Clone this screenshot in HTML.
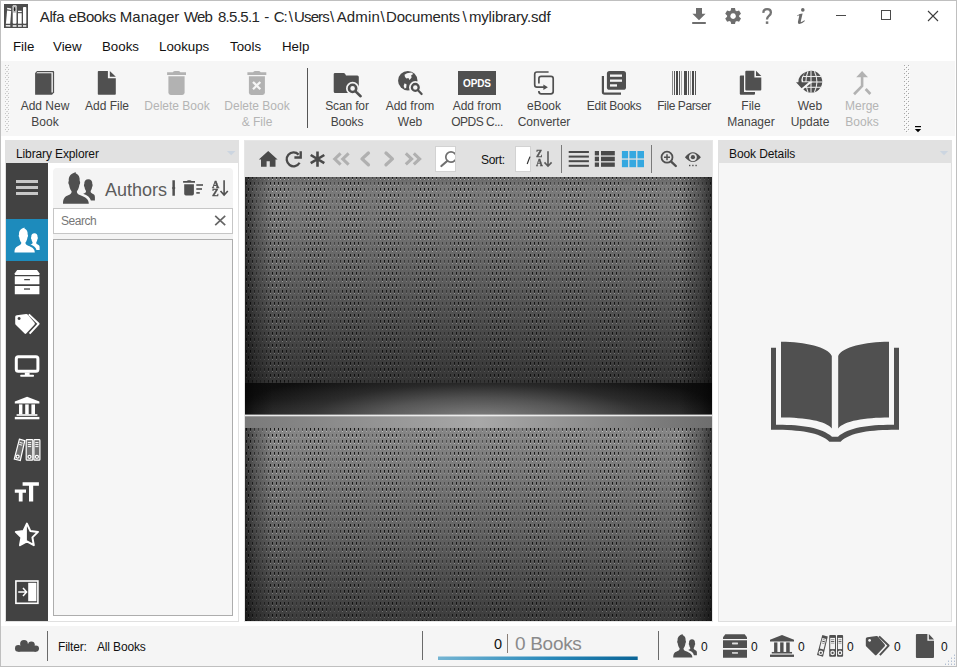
<!DOCTYPE html>
<html>
<head>
<meta charset="utf-8">
<title>Alfa eBooks Manager</title>
<style>
*{box-sizing:border-box;margin:0;padding:0}
html,body{width:957px;height:667px;overflow:hidden;background:#fff}
body{font-family:"Liberation Sans",sans-serif;color:#000;position:relative;font-size:12px}
.abs{position:absolute}
#win{position:absolute;left:0;top:0;width:957px;height:667px;background:#fff;border:1px solid #bfbfbf;overflow:hidden}
.t{position:absolute;white-space:nowrap;line-height:1}
/* title */
#title{left:40px;top:9px;font-size:15px;color:#262626;height:15px;width:520px}
#title span{position:absolute;top:0;white-space:pre}
.menu{top:40px;font-size:13.3px;color:#111}
/* toolbar */
#tb{left:1px;top:61px;width:954px;height:75px;background:#f6f6f6}
.tbl{position:absolute;top:98px;font-size:12px;line-height:16px;color:#444;text-align:center;white-space:nowrap;transform:translateX(-50%)}
.tbl.dis{color:#b4b4b4}
.grip{position:absolute;width:3px;background-image:radial-gradient(circle,#c4c4c4 0.6px,transparent 0.9px);background-size:3px 3px}

.sb0{top:641px;font-size:12px;color:#111}
/* panels */
.phead{position:absolute;height:23px;background:#e1e1e1;font-size:12px;color:#111}
</style>
</head>
<body>
<div id="win"></div>

<!-- TITLE BAR -->
<!-- app icon -->
<svg class="abs" style="left:4px;top:4px" width="24" height="24" viewBox="0 0 24 24">
<rect width="24" height="24" fill="#4d4d4d"/>
<path d="M3.1 6.6 L7.2 7 L6.2 19.7 L1.9 19.7 Z" fill="#fff"/>
<path d="M3.2 3.8 L7.2 4.6 L7.1 5.9 L3.1 5.2 Z" fill="#fff"/>
<path d="M1.8 20.9 L6.3 20.9 L6.3 22.8 L1.8 22.4 Z" fill="#e8e8e8"/>
<rect x="8.7" y="1.2" width="3.8" height="18.5" rx="1" fill="#fff"/>
<rect x="8.7" y="1.2" width="3.8" height="7.5" rx="1" fill="#bdbdbd"/>
<ellipse cx="10.6" cy="5.2" rx="0.75" ry="2.1" fill="#222"/>
<rect x="8.7" y="21" width="3.8" height="1.9" fill="#d8d8d8"/>
<rect x="14" y="6.8" width="3.7" height="1.3" fill="#fff"/>
<rect x="14" y="9.2" width="3.7" height="10.5" fill="#fff"/>
<rect x="14" y="21" width="3.7" height="1.9" fill="#d8d8d8"/>
<rect x="19" y="3" width="3.3" height="16.7" rx="0.8" fill="#fff"/>
<rect x="19" y="21" width="3.3" height="1.9" fill="#d8d8d8"/>
</svg>

<div class="t" id="title"><span style="left:-0.2px;letter-spacing:-0.39px">Alfa</span><span style="left:28.5px;letter-spacing:-0.45px">eBooks</span><span style="left:79.7px;letter-spacing:0.08px">Manager</span><span style="left:144.0px;letter-spacing:-0.90px">Web</span><span style="left:177.9px;letter-spacing:-0.65px">8.5.5.1</span><span style="left:224.3px;letter-spacing:0.00px">-</span><span style="left:233.7px;letter-spacing:-0.90px">C:</span><span style="left:248.8px">\</span><span style="left:254.1px;letter-spacing:-0.90px">Users</span><span style="left:290.0px">\</span><span style="left:296.7px;letter-spacing:0.14px">Admin</span><span style="left:340.4px">\</span><span style="left:346.1px;letter-spacing:-0.23px">Documents</span><span style="left:422.6px">\</span><span style="left:429.0px;letter-spacing:-0.19px">mylibrary.sdf</span></div>


<!-- MENU -->
<div class="t menu" style="left:13px">File</div>
<div class="t menu" style="left:53px">View</div>
<div class="t menu" style="left:102px">Books</div>
<div class="t menu" style="left:159px">Lookups</div>
<div class="t menu" style="left:230px">Tools</div>
<div class="t menu" style="left:282px">Help</div>

<!-- TOOLBAR -->
<div class="abs" id="tb"></div>
<div class="tbl" style="left:45px">Add New<br>Book</div>
<div class="tbl" style="left:107px">Add File</div>
<div class="tbl dis" style="left:177px">Delete Book</div>
<div class="tbl dis" style="left:257px">Delete Book<br>&amp; File</div>
<div class="abs" style="left:307px;top:68px;width:1px;height:60px;background:#555"></div>
<div class="tbl" style="left:347px;letter-spacing:-0.15px">Scan for<br>Books</div>
<div class="tbl" style="left:410px">Add from<br>Web</div>
<div class="tbl" style="left:477px">Add from<br><span style="letter-spacing:-0.5px">OPDS C...</span></div>
<div class="tbl" style="left:544px">eBook<br>Converter</div>
<div class="tbl" style="left:614px;letter-spacing:-0.3px">Edit Books</div>
<div class="tbl" style="left:684px;letter-spacing:-0.4px">File Parser</div>
<div class="tbl" style="left:751px">File<br>Manager</div>
<div class="tbl" style="left:810px">Web<br>Update</div>
<div class="tbl dis" style="left:862px">Merge<br>Books</div>




<!-- LEFT PANEL -->
<div class="abs" style="left:5px;top:140px;width:234px;height:482px;border:1px solid #e0e0e0;border-top:none"></div>
<div class="phead" style="left:5px;top:140px;width:234px"><span class="t" style="left:11px;top:8px;letter-spacing:-0.12px">Library Explorer</span></div>
<div class="abs" style="left:6px;top:163px;width:42px;height:458px;background:#424242"></div>
<div class="abs" style="left:6px;top:219px;width:42px;height:42px;background:#1d8bbc"></div>
<div class="abs" style="left:53px;top:168px;width:180px;height:448px;background:#f4f4f4;border-radius:4px 4px 0 0"></div>
<div class="abs" style="left:53px;top:208px;width:180px;height:26px;background:#fff;border:1px solid #c6c6c6"></div>
<div class="abs" style="left:53px;top:239px;width:180px;height:377px;background:#f6f6f6;border:1px solid #adadad"></div>
<div class="t" style="left:105px;top:181px;font-size:18px;color:#5c5c5c">Authors</div>
<div class="t" style="left:61px;top:215.4px;font-size:12px;color:#777;letter-spacing:-0.45px">Search</div>

<div class="t" style="left:211.5px;top:179.5px;font-family:'Liberation Serif',serif;font-weight:bold;font-size:10px;color:#505050;-webkit-text-stroke:0.35px #505050;will-change:transform">A</div>
<div class="t" style="left:212px;top:188px;font-family:'Liberation Serif',serif;font-weight:bold;font-size:10px;color:#505050;-webkit-text-stroke:0.35px #505050;will-change:transform">Z</div>

<!-- CENTER -->
<div class="abs" style="left:244px;top:140px;width:469px;height:482px;background:#e1e1e1;border:1px solid #e6e6e6"></div>
<svg id="shelf" class="abs" style="left:245px;top:177px" width="467" height="444" viewBox="0 0 467 444" shape-rendering="crispEdges">
<defs>
<linearGradient id="gTop" x1="0" y1="0" x2="0" y2="1">
<stop offset="0" stop-color="#666"/><stop offset="0.05" stop-color="#797979"/><stop offset="0.2" stop-color="#767676"/><stop offset="0.5" stop-color="#5e5e5e"/><stop offset="0.8" stop-color="#454545"/><stop offset="1" stop-color="#353535"/>
</linearGradient>
<linearGradient id="gBot" x1="0" y1="0" x2="0" y2="1">
<stop offset="0" stop-color="#868686"/><stop offset="0.15" stop-color="#7e7e7e"/><stop offset="0.5" stop-color="#666"/><stop offset="0.8" stop-color="#4c4c4c"/><stop offset="1" stop-color="#3c3c3c"/>
</linearGradient>
<linearGradient id="gDark" x1="0" y1="0" x2="0" y2="1">
<stop offset="0" stop-color="#0e0e0e"/><stop offset="0.5" stop-color="#121212"/><stop offset="1" stop-color="#202020"/>
</linearGradient>
<radialGradient id="gGlow" gradientUnits="userSpaceOnUse" cx="0" cy="0" r="1" gradientTransform="translate(233 240) scale(250 50)">
<stop offset="0" stop-color="#fff" stop-opacity="0.42"/><stop offset="0.38" stop-color="#fff" stop-opacity="0.27"/><stop offset="0.66" stop-color="#fff" stop-opacity="0.11"/><stop offset="1" stop-color="#fff" stop-opacity="0"/>
</radialGradient>
<linearGradient id="gFront" x1="0" y1="0" x2="1" y2="0">
<stop offset="0" stop-color="#7a7a7a"/><stop offset="0.5" stop-color="#a8a8a8"/><stop offset="1" stop-color="#6e6e6e"/>
</linearGradient>
<linearGradient id="gVig" x1="0" y1="0" x2="1" y2="0">
<stop offset="0" stop-color="#000" stop-opacity="0.6"/><stop offset="0.02" stop-color="#000" stop-opacity="0.3"/><stop offset="0.06" stop-color="#000" stop-opacity="0"/><stop offset="0.93" stop-color="#000" stop-opacity="0"/><stop offset="0.975" stop-color="#000" stop-opacity="0.3"/><stop offset="1" stop-color="#000" stop-opacity="0.6"/>
</linearGradient>
<pattern id="ph1" x="0" y="-1" width="4" height="12" patternUnits="userSpaceOnUse">
<rect x="3" y="0" width="1" height="2" fill="#0c0c0c" fill-opacity="0.9"/><rect x="3" y="2" width="1" height="1" fill="#0c0c0c" fill-opacity="0.55"/>
<rect x="1" y="6" width="1" height="2" fill="#0c0c0c" fill-opacity="0.9"/><rect x="1" y="8" width="1" height="1" fill="#0c0c0c" fill-opacity="0.55"/>
</pattern>
<pattern id="pl1" x="0" y="-1" width="4" height="12" patternUnits="userSpaceOnUse">
<rect x="3" y="3" width="1" height="1" fill="#fff" fill-opacity="0.55"/><rect x="1" y="9" width="1" height="1" fill="#fff" fill-opacity="0.55"/>
</pattern>
<pattern id="ph2" x="0" y="251" width="4" height="12" patternUnits="userSpaceOnUse">
<rect x="1" y="0" width="1" height="2" fill="#0c0c0c" fill-opacity="0.9"/><rect x="1" y="2" width="1" height="1" fill="#0c0c0c" fill-opacity="0.55"/>
<rect x="3" y="6" width="1" height="2" fill="#0c0c0c" fill-opacity="0.9"/><rect x="3" y="8" width="1" height="1" fill="#0c0c0c" fill-opacity="0.55"/>
</pattern>
<pattern id="pl2" x="0" y="251" width="4" height="12" patternUnits="userSpaceOnUse">
<rect x="1" y="3" width="1" height="1" fill="#fff" fill-opacity="0.55"/><rect x="3" y="9" width="1" height="1" fill="#fff" fill-opacity="0.55"/>
</pattern>
<linearGradient id="gMoire" gradientUnits="userSpaceOnUse" x1="15" y1="0" x2="51.85" y2="0" spreadMethod="repeat">
<stop offset="0" stop-color="#fff" stop-opacity="0.4"/><stop offset="0.12" stop-color="#fff" stop-opacity="0.55"/><stop offset="0.3" stop-color="#fff" stop-opacity="1"/><stop offset="0.7" stop-color="#fff" stop-opacity="1"/><stop offset="0.88" stop-color="#fff" stop-opacity="0.55"/><stop offset="1" stop-color="#fff" stop-opacity="0.4"/>
</linearGradient>
<linearGradient id="gFade1" gradientUnits="userSpaceOnUse" x1="0" y1="0" x2="0" y2="206">
<stop offset="0" stop-color="#000" stop-opacity="0"/><stop offset="0.3" stop-color="#000" stop-opacity="0.1"/><stop offset="1" stop-color="#000" stop-opacity="0.6"/>
</linearGradient>
<linearGradient id="gFade2" gradientUnits="userSpaceOnUse" x1="0" y1="251" x2="0" y2="444">
<stop offset="0" stop-color="#000" stop-opacity="0"/><stop offset="0.3" stop-color="#000" stop-opacity="0.1"/><stop offset="1" stop-color="#000" stop-opacity="0.55"/>
</linearGradient>
<mask id="mMoire" maskUnits="userSpaceOnUse" x="0" y="0" width="467" height="444"><rect x="0" y="0" width="467" height="444" fill="url(#gMoire)"/></mask>
<mask id="mL1" maskUnits="userSpaceOnUse" x="0" y="0" width="467" height="444"><rect x="0" y="0" width="467" height="444" fill="url(#gMoire)"/><rect x="0" y="0" width="467" height="206" fill="url(#gFade1)"/></mask>
<mask id="mL2" maskUnits="userSpaceOnUse" x="0" y="0" width="467" height="444"><rect x="0" y="0" width="467" height="444" fill="url(#gMoire)"/><rect x="0" y="251" width="467" height="193" fill="url(#gFade2)"/></mask>
</defs>
<rect x="0" y="0" width="467" height="206" fill="url(#gTop)"/>
<rect x="0" y="0" width="467" height="206" fill="url(#ph1)" mask="url(#mMoire)"/>
<rect x="0" y="0" width="467" height="206" fill="url(#pl1)" mask="url(#mL1)"/>
<rect x="0" y="251" width="467" height="193" fill="url(#gBot)"/>
<rect x="0" y="251" width="467" height="193" fill="url(#ph2)" mask="url(#mMoire)"/>
<rect x="0" y="251" width="467" height="193" fill="url(#pl2)" mask="url(#mL2)"/>
<rect x="0" y="206" width="467" height="32" fill="url(#gDark)"/>
<rect x="0" y="206" width="467" height="32" fill="url(#gGlow)"/>
<rect x="0" y="239" width="467" height="12" fill="url(#gFront)"/>
<rect x="0" y="237" width="467" height="1" fill="#fff" fill-opacity="0.35"/>
<rect x="0" y="238" width="467" height="1" fill="#ececec"/>
<rect x="0" y="239" width="467" height="1" fill="#fff" fill-opacity="0.25"/>
<rect x="0" y="0" width="467" height="237" fill="url(#gVig)"/>
<rect x="0" y="251" width="467" height="193" fill="url(#gVig)"/>
</svg>

<div class="t" style="left:481px;top:154px;font-size:12px;color:#111;letter-spacing:-0.3px">Sort:</div>
<div class="t" style="left:535.5px;top:149.5px;font-family:'Liberation Serif',serif;font-weight:bold;font-size:9.5px;color:#555;-webkit-text-stroke:0.3px #555;will-change:transform">Z</div>
<div class="t" style="left:535.5px;top:158.5px;font-family:'Liberation Serif',serif;font-weight:bold;font-size:9.5px;color:#555;-webkit-text-stroke:0.3px #555;will-change:transform">A</div>

<!-- RIGHT PANEL -->
<div class="abs" style="left:718px;top:163px;width:234px;height:459px;background:#f6f6f6;border:1px solid #dedede;border-top:none"></div>
<div class="phead" style="left:718px;top:140px;width:234px"><span class="t" style="left:11px;top:8px;letter-spacing:-0.1px">Book Details</span></div>

<!-- STATUS BAR -->
<div class="abs" id="sb" style="left:1px;top:626px;width:955px;height:40px;background:#f5f5f5"></div>
<div class="abs" style="left:47px;top:631px;width:1px;height:30px;background:#6a6a6a"></div>
<div class="abs" style="left:422px;top:631px;width:1px;height:29px;background:#6a6a6a"></div>
<div class="abs" style="left:658px;top:631px;width:1px;height:29px;background:#6a6a6a"></div>
<div class="t" style="left:58px;top:641px;font-size:12px;color:#111;letter-spacing:-0.2px">Filter:</div>
<div class="t" style="left:97px;top:641px;font-size:12px;color:#111;letter-spacing:-0.15px">All Books</div>
<div class="t" style="left:494px;top:637px;font-size:14.5px;color:#111">0</div>
<div class="abs" style="left:507px;top:634px;width:1px;height:19px;background:#8a7e76"></div>
<div class="t" style="left:515px;top:634px;font-size:19px;color:#8a8a8a;letter-spacing:-0.3px">0 Books</div>
<div class="t sb0" style="left:701px">0</div>
<div class="t sb0" style="left:751px">0</div>
<div class="t sb0" style="left:798px">0</div>
<div class="t sb0" style="left:847px">0</div>
<div class="t sb0" style="left:894px">0</div>
<div class="t sb0" style="left:941px">0</div>

<!-- ICON OVERLAY (page coordinates) -->
<svg id="ico" class="abs" style="left:0;top:0" width="957" height="667" viewBox="0 0 957 667">
<defs>
<symbol id="authors" viewBox="0 0 32 32" overflow="visible">
<path d="M0 31.8 C0 26.4 2 24.6 5.2 23.3 C8 22.1 8.7 21.2 8.6 19.2 C7.1 17.2 6.3 14.8 6.1 12.7 C5.2 11.8 5.1 9.6 5.8 8.9 C5.4 4.2 7.8 1.6 12.9 0 C12.6 0.6 12.5 1 12.7 1.3 C15.6 2.6 17 5 16.7 8.9 C17.4 9.6 17.3 11.8 16.4 12.7 C16.2 14.8 15.4 17.2 13.9 19.2 C13.8 21.2 14.5 22.1 17.4 23.3 C22.4 25.3 25.8 27.2 25.8 31.8 Z"/>
<path d="M20.2 21.7 C22.2 21 23.1 20.5 23 19 C22.1 17.6 21.6 16.1 21.5 14.9 C20.8 14.2 20.8 12.7 21.3 12.1 C21.1 9 22.7 7.2 25.3 7.2 C27.9 7.2 29.5 9 29.3 12.1 C29.8 12.7 29.8 14.2 29.1 14.9 C29 16.1 28.5 17.6 27.6 19 C27.5 20.5 28.3 21.2 30 21.9 C31.6 22.6 31.9 23.6 31.9 25.2 V28.6 H27.9 C27.2 25.4 24.4 23.3 20.2 21.7 Z"/>
</symbol>
<symbol id="cabinet" viewBox="0 0 24.6 24.2" overflow="visible">
<path d="M2.4 0 H22.2 L24.6 3.2 V5 H0 V3.2 Z"/>
<path d="M0 6.2 H24.6 V14.3 H0 Z M9.4 8.9 V10.3 H15.1 V8.9 Z" fill-rule="evenodd"/>
<path d="M0 16 H24.6 V24.2 H0 Z M9.4 18.2 V19.9 H15.1 V18.2 Z" fill-rule="evenodd"/>
</symbol>
<symbol id="bank" viewBox="0 0 24.6 22.6" overflow="visible">
<path d="M12.3 0 L24.6 4.8 V6.8 H0 V4.8 Z"/>
<rect x="4.2" y="7.6" width="3.4" height="10"/><rect x="10.4" y="7.6" width="3.5" height="10"/><rect x="16.6" y="7.6" width="3.6" height="10"/>
<rect x="1.8" y="17.4" width="20.8" height="1.6"/><rect x="0" y="20.1" width="24.6" height="2.4"/>
</symbol>
<symbol id="tags" viewBox="0 0 24.6 20.2" overflow="visible">
<path d="M1.6 1.1 L11 0 Q11.8 -0.1 12.4 0.5 L19.4 8.7 Q20 9.6 19.4 10.4 L11 19.5 Q10.2 20.3 9.4 19.5 L0.5 10.6 Q0 10.1 0 9.4 V2.6 Q0 1.3 1.6 1.1 Z M3.9 2.9 A1.5 1.5 0 1 0 3.91 2.9 Z" fill-rule="evenodd"/>
<path d="M13.6 0.3 L23.4 9.7 L14.4 19.6" fill="none" stroke-width="2" stroke="currentColor" stroke-linejoin="round"/>
</symbol>
</defs>

<g id="grips" shape-rendering="crispEdges">
<pattern id="pgR" x="904" y="111" width="8" height="4" patternUnits="userSpaceOnUse">
<rect x="2" y="0" width="1" height="1" fill="#a6a6a6"/><rect x="3" y="1" width="1" height="1" fill="#fff"/>
<rect x="0" y="2" width="1" height="1" fill="#a6a6a6"/><rect x="1" y="3" width="1" height="1" fill="#fff"/>
<rect x="4" y="2" width="1" height="1" fill="#a6a6a6"/><rect x="5" y="3" width="1" height="1" fill="#fff"/>
</pattern>
<pattern id="pgL" x="5" y="65" width="8" height="4" patternUnits="userSpaceOnUse">
<rect x="0" y="0" width="1" height="1" fill="#c4c4c4"/><rect x="3" y="0" width="1" height="1" fill="#c4c4c4"/>
<rect x="1" y="2" width="2" height="1" fill="#d4d4d4"/>
<rect x="1" y="1" width="1" height="1" fill="#fcfcfc"/><rect x="4" y="1" width="1" height="1" fill="#fcfcfc"/>
</pattern>
<rect x="904" y="65" width="6" height="68" fill="url(#pgR)"/>
<rect x="5" y="65" width="5" height="67" fill="url(#pgL)"/>
</g>
<g id="title-icons">
<path d="M696 8 H702 V13.8 H705.6 L699 20.2 L692.4 13.8 H696 Z M692.2 22 H705.8 V24 H692.2 Z" fill="#6e6e6e"/>
<g transform="translate(733.1 16.1)" fill="#6e6e6e">
<path d="M-1.9 -8 H1.9 L2.4 -5.6 L0 -4 L-2.4 -5.6 Z" id="tooth"/>
<use href="#tooth" transform="rotate(60)"/><use href="#tooth" transform="rotate(120)"/><use href="#tooth" transform="rotate(180)"/><use href="#tooth" transform="rotate(240)"/><use href="#tooth" transform="rotate(300)"/>
<path d="M0 -6.1 A6.1 6.1 0 1 0 0.01 -6.1 Z M0 -2.8 A2.8 2.8 0 1 1 -0.01 -2.8 Z" fill-rule="evenodd"/>
</g>
<path d="M763.3 12.9 Q763.4 9.1 767.1 9.1 Q770.9 9.1 770.9 12.4 Q770.9 14.3 768.9 15.9 Q767 17.4 767 19.6" fill="none" stroke="#747474" stroke-width="2.3"/>
<rect x="765.8" y="21.4" width="2.5" height="2.5" fill="#747474"/>
<circle cx="802.8" cy="9.9" r="1.8" fill="#6a6a6a"/>
<path d="M797.2 15.4 Q799.6 13.5 802.6 13.5 L800.8 21.3 Q800.6 22.2 801.4 21.9 L804.5 20.2 L804.9 21.1 Q802 24 799.5 24 Q797.5 24 797.9 22.1 L799.2 15.9 Q799.3 15.1 798.6 15.4 L797.5 16.2 Z" fill="#6a6a6a"/>
<rect x="836" y="15" width="10" height="1" fill="#4a4a4a"/>
<rect x="881.5" y="10.5" width="9" height="9" fill="none" stroke="#4a4a4a" stroke-width="1"/>
<path d="M928 11 L938 21 M938 11 L928 21" stroke="#3c3c3c" stroke-width="1.1" fill="none"/>
</g>
<g id="tb-icons" fill="#505050">
<!-- add new book -->
<path d="M37 71 H53.2 Q54.1 71 54.1 71.9 V92.6 L52 94.8 H35.1 V72.9 Z"/>
<path d="M37.2 72.3 H52.8 V92.6 H51.5 V73.3 H36.4 Z" fill="#fff"/>
<!-- add file -->
<path d="M98.6 71 H107.9 V78.2 H115.8 V94 Q115.8 94.8 115 94.8 H98.6 Q97.8 94.8 97.8 94 V71.8 Q97.8 71 98.6 71 Z"/>
<path d="M109.8 71 L115.8 76.8 H109.8 Z"/>
<!-- delete book -->
<g fill="#b2b2b2">
<path d="M167.1 72.2 H172.8 Q173.6 70.9 175 70.9 H178.2 Q179.6 70.9 180.4 72.2 H186 V74.9 H167.1 Z"/>
<path d="M168.4 76.2 H184.6 V92.6 Q184.6 94.9 182.3 94.9 H170.7 Q168.4 94.9 168.4 92.6 Z"/>
<!-- delete book & file -->
<path d="M247.4 72.2 H253.1 Q253.9 70.9 255.3 70.9 H258.5 Q259.9 70.9 260.7 72.2 H266.3 V74.9 H247.4 Z"/>
<path d="M248.9 76.2 H264.9 V92.6 Q264.9 94.9 262.6 94.9 H251.2 Q248.9 94.9 248.9 92.6 Z"/>
</g>
<path d="M253 82 L260.3 89.2 M260.3 82 L253 89.2" stroke="#f5f5f5" stroke-width="2.3" fill="none"/>
<!-- scan for books -->
<path d="M335 72.9 H343.5 Q344.6 72.9 345.2 74 L346 75.4 H357.3 Q358.8 75.4 358.8 76.9 V91.4 Q358.8 92.9 357.3 92.9 H335.2 Q333.7 92.9 333.7 91.4 V74.3 Q333.7 72.9 335 72.9 Z"/>
<circle cx="352.6" cy="88.4" r="6.6" fill="#f5f5f5"/>
<path d="M356 92 L361.8 97.6" stroke="#f5f5f5" stroke-width="4.6" fill="none" stroke-linecap="round"/>
<circle cx="352.6" cy="88.4" r="3.6" fill="none" stroke="#505050" stroke-width="2.6"/>
<path d="M355.8 91.6 L360.6 96.2" stroke="#505050" stroke-width="2.6" fill="none" stroke-linecap="round"/>
<!-- add from web -->
<circle cx="407.8" cy="80.7" r="9.7"/>
<path d="M404.5 74.8 L407 73.3 L411.5 72.6 L413.3 74 L411.2 75.2 L411.6 77.6 L409.6 80 L408.4 78 L406.4 78.4 L405 77 Z" fill="#f5f5f5"/>
<path d="M404.6 83.2 L406.6 84.6 L406.2 87.4 L404.8 88.8 L403.6 86 Z" fill="#f5f5f5"/>
<circle cx="415.3" cy="87.4" r="6.3" fill="#f5f5f5"/>
<path d="M418.4 90.6 L422.3 94.8" stroke="#f5f5f5" stroke-width="4.4" fill="none" stroke-linecap="round"/>
<circle cx="415.3" cy="87.4" r="3.4" fill="none" stroke="#505050" stroke-width="2.3"/>
<path d="M418 90.2 L421.6 94" stroke="#505050" stroke-width="2.2" fill="none" stroke-linecap="round"/>
<!-- OPDS -->
<rect x="458" y="71" width="38" height="24"/>
<!-- ebook converter -->
<g fill="none" stroke="#505050" stroke-width="1.7">
<path d="M548.6 72 H537 Q534.7 72 534.7 74.3 V84.8 Q534.7 87.2 537 87.2 H545"/>
<path d="M538.9 83.6 V78.6 Q538.9 76.3 541.2 76.3 H550.9 Q553.2 76.3 553.2 78.6 V91.5 Q553.2 93.8 550.9 93.8 H541.2 Q538.9 93.8 538.9 91.5 V91"/>
</g>
<path d="M543.4 84.4 L547.9 87.2 L543.4 90 Z"/>
<!-- edit books -->
<rect x="606.9" y="71" width="19.1" height="18.8" rx="2.6"/>
<path d="M602.9 76 V92 Q602.9 93.7 604.6 93.7 H621" fill="none" stroke="#505050" stroke-width="2.2"/>
<g fill="#f5f5f5"><rect x="610" y="74.5" width="12" height="2.3"/><rect x="610" y="79.5" width="12" height="2.3"/><rect x="610" y="84.3" width="7" height="2.3"/></g>
<!-- file parser (barcode) -->
<rect x="672" y="71" width="1" height="24" fill="#8a8a8a"/><rect x="674" y="71" width="1" height="24" fill="#585858"/><rect x="676" y="71" width="2" height="24" fill="#484848"/><rect x="679" y="71" width="1" height="24" fill="#585858"/><rect x="681" y="71" width="1" height="24" fill="#a8a8a8"/><rect x="684" y="71" width="3" height="24" fill="#4c4c4c"/><rect x="688" y="71" width="1" height="24" fill="#585858"/><rect x="690" y="71" width="1" height="24" fill="#a8a8a8"/><rect x="692" y="71" width="2" height="24" fill="#484848"/><rect x="695" y="71" width="1" height="24" fill="#585858"/>
<!-- file manager -->
<path d="M740.8 75.6 H744 V92 H755 V93.8 Q755 94.8 754 94.8 H740.8 Q739.8 94.8 739.8 93.8 V76.6 Q739.8 75.6 740.8 75.6 Z"/>
<path d="M746.3 70.8 H754.4 V77.4 H761.3 V89.6 Q761.3 90.6 760.3 90.6 H746.3 Q745.3 90.6 745.3 89.6 V71.8 Q745.3 70.8 746.3 70.8 Z"/>
<path d="M756 70.8 L761.3 76 H756 Z"/>
<!-- web update -->
<circle cx="811.3" cy="81.7" r="10.9"/>
<g fill="none" stroke="#e9e9e9" stroke-width="1.1">
<path d="M811 70.8 V92.6"/><path d="M801 76.5 H822"/><path d="M800.4 82 H822.2"/><path d="M801 87.3 H822"/>
<path d="M808 71.2 Q803.8 81.7 808 92.2"/><path d="M814.4 71.2 Q819.4 81.7 814.4 92.2"/>
</g>
<path d="M798.6 70 H806 Q800.6 76 802.4 82.6 H810.5 L801.4 89.6 L794.2 82.6 H797.4 Q795.4 75.6 798.6 70 Z" fill="#f5f5f5" stroke="#f5f5f5" stroke-width="1.6"/>
<path d="M806.6 71.5 Q800 77 801.8 82.3 H808.8 L801.6 88.3 L796 82.3 H798.4 Q797.6 75.6 806.6 71.5 Z" fill="#505050"/>
<!-- merge books -->
<g fill="#b2b2b2">
<path d="M862.1 71 L868 77.3 H863.4 V86.6 L855 95.2 L853.1 93.3 L860.8 85.5 V77.3 H856.2 Z"/>
<path d="M866.6 88.1 L871.3 93.1 L869.4 95 L864.7 90 Z"/>
</g>
<!-- overflow arrow -->
<rect x="915" y="126" width="6" height="1.2" fill="#000"/>
<path d="M914.8 129 H921.2 L918 132.2 Z" fill="#000"/>
</g>

<g id="left-icons">
<!-- hamburger -->
<g fill="#c8c8c8"><rect x="16" y="180" width="22" height="3"/><rect x="16" y="186" width="22" height="3"/><rect x="16" y="192" width="22" height="3"/></g>
<!-- authors big -->
<use href="#authors" x="63" y="172" width="32" height="32" fill="#505050"/>
<!-- header separator -->
<path d="M172.4 180.3 H174.9 V187 L175.4 188 L174.9 189 V195.7 H172.4 V189 L171.9 188 L172.4 187 Z" fill="#505050"/>
<!-- trash+lines -->
<g fill="#505050">
<path d="M183.1 181.1 H186.8 Q187.4 180.2 188.4 180.2 H190 Q191 180.2 191.6 181.1 H195 V182.8 H183.1 Z"/>
<path d="M184.2 184.2 H193.9 V193.8 Q193.9 195.5 192.2 195.5 H185.9 Q184.2 195.5 184.2 193.8 Z"/>
<rect x="196.3" y="184.2" width="6.7" height="1.6"/><rect x="196.3" y="188.2" width="5.7" height="1.6"/><rect x="196.3" y="192.1" width="3.5" height="1.6"/>
</g>
<!-- AZ arrow -->
<path d="M224.1 180.3 V194.6 M220.5 191 L224.1 195 L227.8 191" fill="none" stroke="#505050" stroke-width="1.6"/>
<!-- search clear X -->
<path d="M215.2 215.9 L225.2 225.2 M225.2 215.9 L215.2 225.2" stroke="#666" stroke-width="1.7" fill="none"/>
<!-- sidebar: authors -->
<use href="#authors" x="14.5" y="227.5" width="25.2" height="25.2" fill="#fff"/>
<!-- cabinet -->
<use href="#cabinet" x="14.8" y="270" width="24.6" height="24.2" fill="#fff"/>
<rect x="24.2" y="288.1" width="5.7" height="1.7" fill="#8a8a8a"/>
<!-- tags -->
<use href="#tags" x="15.2" y="314.1" width="24.6" height="20.2" fill="#fff" color="#fff"/>
<!-- monitor -->
<rect x="16.3" y="356.7" width="21.6" height="14.6" rx="2" fill="none" stroke="#fff" stroke-width="3"/>
<rect x="24.8" y="372.5" width="4.8" height="2.6" fill="#fff"/><rect x="20.2" y="374.7" width="13.8" height="2.1" rx="0.8" fill="#fff"/>
<!-- bank -->
<use href="#bank" x="14.8" y="396.8" width="24.6" height="22.6" fill="#fff"/>
<!-- binders -->
<g fill="#707070" stroke="#fff" stroke-width="1.2">
<path d="M19.4 439.2 L24.8 440.7 L20.3 460.5 L14.3 459.1 Z"/>
<rect x="26.2" y="439.6" width="6.6" height="20.6" rx="0.8"/>
<rect x="33.9" y="439.6" width="6" height="20.6" rx="0.8"/>
<circle cx="17.6" cy="456.6" r="1.5" fill="#404040" stroke-width="1.3"/><circle cx="29.5" cy="456.8" r="1.5" fill="#404040" stroke-width="1.3"/><circle cx="36.9" cy="456.8" r="1.5" fill="#404040" stroke-width="1.3"/>
</g>
<g stroke="#fff" stroke-width="1" fill="none"><path d="M27.8 442.6 H31.2 M27.8 444.6 H31.2 M27.8 446.6 H31.2 M35.3 442.6 H38.5 M35.3 444.6 H38.5 M35.3 446.6 H38.5 M19.6 442.4 L22.6 443.2 M19.2 444.4 L22.2 445.2"/></g>
<!-- TT -->
<path d="M22.6 482.2 H38.9 V485.8 H33.2 V501.4 H29 V485.8 H22.6 Z M14.8 489.4 H26 V492.7 H22.6 V501.4 H18.8 V492.7 H14.8 Z" fill="#fff"/>
<!-- star -->
<path d="M26.9 523.6 L30.3 530.9 L38 531.9 L32.4 537.4 L33.8 545.2 L26.9 541.4 L20 545.2 L21.4 537.4 L15.8 531.9 L23.5 530.9 Z" fill="none" stroke="#fff" stroke-width="2" stroke-linejoin="round"/>
<path d="M26.9 523.6 V541.4 L20 545.2 L21.4 537.4 L15.8 531.9 L23.5 530.9 Z" fill="#fff"/>
<!-- collapse -->
<rect x="15.9" y="581" width="22" height="22.3" fill="none" stroke="#fff" stroke-width="1.6"/>
<rect x="28.2" y="582.8" width="8.2" height="18.4" fill="#fff"/>
<path d="M18.2 592 H26 M23 588 L26.6 592 L23 596" fill="none" stroke="#fff" stroke-width="1.5"/>
</g>

<g id="center-icons">
<!-- home -->
<path d="M268.2 151 L277.6 159.6 H275.5 V166.7 H269.8 V161.3 H266.6 V166.7 H261 V159.6 H258.8 Z" fill="#4a4a4a"/>
<!-- refresh -->
<path d="M298.6 154.6 A6.9 6.9 0 1 0 299.6 162.8" fill="none" stroke="#4a4a4a" stroke-width="2.3"/>
<path d="M300.7 151.2 V157.5 H294.4" fill="none" stroke="#4a4a4a" stroke-width="2.4"/>
<!-- asterisk -->
<path d="M317.5 151.5 V166.7 M310.7 155 L324.3 163.2 M324.3 155 L310.7 163.2" fill="none" stroke="#4a4a4a" stroke-width="2.6"/>
<!-- nav chevrons (disabled) -->
<g fill="none" stroke="#b0b0b0" stroke-width="3.1">
<path d="M340.6 153.4 L334.8 159 L340.6 164.6"/><path d="M348.6 153.4 L342.8 159 L348.6 164.6"/>
<path d="M405.8 153.4 L411.6 158.9 L405.8 164.4"/><path d="M413.8 153.4 L419.6 158.9 L413.8 164.4"/>
</g>
<g fill="none" stroke="#b0b0b0" stroke-width="3.3" stroke-linecap="round" stroke-linejoin="round">
<path d="M368.4 153 L362 158.9 L368.4 164.8"/><path d="M386 153 L392.4 158.9 L386 164.8"/>
</g>
<!-- search box -->
<rect x="435.5" y="146.5" width="20" height="25" fill="#fff" stroke="#d2d2d2" stroke-width="1"/>
<clipPath id="cpS"><rect x="436" y="147" width="19" height="24"/></clipPath>
<g clip-path="url(#cpS)" fill="none" stroke="#707070"><circle cx="451" cy="157" r="5.2" stroke-width="1.7"/><path d="M447.2 161 L441.4 166" stroke-width="2.2" stroke-linecap="round"/></g>
<!-- sort combo -->
<rect x="515.5" y="146.5" width="15" height="25" fill="#fff" stroke="#d2d2d2" stroke-width="1"/>
<path d="M527.2 164 L530 156.6" stroke="#333" stroke-width="1.2" fill="none"/>
<!-- ZA arrow -->
<path d="M548 151.3 V165.6 M544.5 162.4 L548 166.2 L551.6 162.4" fill="none" stroke="#5a5a5a" stroke-width="1.6"/>
<!-- separators -->
<rect x="561" y="145" width="1" height="28" fill="#7a7a7a"/>
<rect x="651" y="145" width="1" height="28" fill="#7a7a7a"/>
<!-- list -->
<g fill="#4a4a4a"><rect x="568.7" y="151" width="20.2" height="2"/><rect x="568.7" y="155.6" width="20.2" height="2"/><rect x="568.7" y="160.2" width="20.2" height="2"/><rect x="568.7" y="164.8" width="20.2" height="2"/>
<!-- details -->
<rect x="594.8" y="151" width="4.2" height="4.4"/><rect x="601" y="151" width="13.8" height="4.4"/>
<rect x="594.8" y="156.7" width="4.2" height="4.5"/><rect x="601" y="156.7" width="13.8" height="4.5"/>
<rect x="594.8" y="162.5" width="4.2" height="4.3"/><rect x="601" y="162.5" width="13.8" height="4.3"/></g>
<!-- grid (active) -->
<g fill="#35a8e0"><rect x="621.9" y="151" width="6.2" height="7.4"/><rect x="629.4" y="151" width="6.7" height="7.4"/><rect x="637.4" y="151" width="6.6" height="7.4"/>
<rect x="621.9" y="159.7" width="6.2" height="7.5"/><rect x="629.4" y="159.7" width="6.7" height="7.5"/><rect x="637.4" y="159.7" width="6.6" height="7.5"/></g>
<!-- zoom -->
<g fill="none" stroke="#505050"><circle cx="667" cy="157.2" r="5.5" stroke-width="1.8"/><path d="M671.2 161.6 L675.8 166" stroke-width="2.4" stroke-linecap="round"/><path d="M664 157.2 H670 M667 154.2 V160.2" stroke-width="1.5"/></g>
<!-- eye -->
<path d="M684.9 157.2 Q692.9 147.4 700.9 157.2 Q692.9 166.6 684.9 157.2 Z M692.9 153.2 A4 4 0 1 0 692.91 153.2 Z" fill="#505050" fill-rule="evenodd"/>
<circle cx="692.9" cy="157.2" r="2.1" fill="#505050"/>
<g fill="#505050"><rect x="689" y="164.8" width="1.4" height="1.4"/><rect x="692.2" y="164.8" width="1.4" height="1.4"/><rect x="695.4" y="164.8" width="1.4" height="1.4"/></g>
</g>
<g id="right-icons">
<path d="M939.8 151 H948.2 L944 155.2 Z" fill="#ccd5e0"/>
<path d="M226.9 151 H235.5 L231.2 155.2 Z" fill="#ccd5e0"/>
<!-- big open book -->
<g fill="#505050">
<path d="M781 341.8 C805 342 828 347 831.8 356 V428.6 C826 421 805 417.6 781 417.6 Z"/>
<path d="M889 341.8 C865 342 842 347 838.2 356 V428.6 C844 421 865 417.6 889 417.6 Z"/>
<path d="M771 347.8 H776 V424.8 C800 424.6 822 427.4 832 436.8 H838 C848 427.4 870 424.6 894 424.8 V347.8 H899 V429.8 C873 429.6 850 432 840.6 441.8 H829.4 C820 432 797 429.6 771 429.8 Z"/>
</g>
</g>

<linearGradient id="gProg" x1="0" y1="0" x2="1" y2="0"><stop offset="0" stop-color="#74b4d2"/><stop offset="0.55" stop-color="#2a8abb"/><stop offset="1" stop-color="#0a6496"/></linearGradient>
<rect x="438" y="656.5" width="199.7" height="3.5" fill="url(#gProg)"/>
<g id="sb-icons" fill="#505050">
<!-- cloud -->
<circle cx="18.3" cy="648.4" r="3.3"/><circle cx="24" cy="643.9" r="3.9"/><circle cx="31.4" cy="644.9" r="3.3"/><circle cx="35.9" cy="648.6" r="3.1"/>
<rect x="18.3" y="646" width="17.6" height="5.7"/><rect x="21" y="643.9" width="13.4" height="4"/>
<use href="#authors" x="672.8" y="634" width="24.6" height="23.7" preserveAspectRatio="none"/>
<use href="#cabinet" x="723" y="634" width="24" height="23.9" preserveAspectRatio="none"/>
<rect x="732.4" y="642.7" width="5.5" height="1.5" fill="#e0e0e0"/><rect x="732.4" y="652.2" width="5.5" height="1.7" fill="#bdbdbd"/>
<use href="#bank" x="770" y="634.8" width="24" height="22.4" preserveAspectRatio="none"/>
<!-- binders -->
<path d="M822.3 635 L827.8 636.5 L823 656.7 L817 655.1 Z"/>
<rect x="829.2" y="635" width="6.8" height="21.7" rx="0.9"/>
<rect x="837" y="635" width="6.1" height="21.7" rx="0.9"/>
<g fill="#f2f2f2"><path d="M822.4 637.9 L826.2 638.9 L823.6 649.6 L819.8 648.6 Z"/><rect x="830.2" y="637.9" width="4.8" height="11.2"/><rect x="837.9" y="637.9" width="4.2" height="11.2"/>
<circle cx="820.8" cy="652.8" r="2.3"/><circle cx="832.6" cy="652.9" r="2.3"/><circle cx="840" cy="652.9" r="2.3"/></g>
<circle cx="820.8" cy="652.8" r="1.1"/><circle cx="832.6" cy="652.9" r="1.1"/><circle cx="840" cy="652.9" r="1.1"/>
<path d="M830.9 641.4 H834.3 M838.5 641.4 H841.5 M822.2 641.2 L825 641.9" stroke="#505050" stroke-width="1" fill="none"/>
<path d="M830.9 639.5 H834.3 M830.9 643.2 H834.3 M838.5 639.5 H841.5 M838.5 643.2 H841.5 M822.7 639.4 L825.5 640.1 M821.8 643 L824.6 643.7" stroke="#9a9a9a" stroke-width="0.9" fill="none"/>
<use href="#tags" x="865.8" y="636.1" width="24" height="19.7" preserveAspectRatio="none" color="#505050"/>
<!-- file -->
<path d="M916.9 634 H927.4 V640.8 H934 V656.9 Q934 657.9 933 657.9 H916.9 Q915.9 657.9 915.9 656.9 V635 Q915.9 634 916.9 634 Z"/>
<path d="M928.8 634 L934 639.4 H928.8 Z"/>
<!-- resize grip -->
<g fill="#b2bfd2" shape-rendering="crispEdges"><rect x="954" y="655" width="1" height="1"/><rect x="954" y="654" width="1" height="1" fill-opacity="0.45"/><rect x="951" y="658" width="1" height="1"/><rect x="951" y="657" width="1" height="1" fill-opacity="0.45"/><rect x="954" y="658" width="1" height="1"/><rect x="954" y="657" width="1" height="1" fill-opacity="0.45"/><rect x="948" y="661" width="1" height="1"/><rect x="948" y="660" width="1" height="1" fill-opacity="0.45"/><rect x="951" y="661" width="1" height="1"/><rect x="951" y="660" width="1" height="1" fill-opacity="0.45"/><rect x="954" y="661" width="1" height="1"/><rect x="954" y="660" width="1" height="1" fill-opacity="0.45"/><rect x="945" y="664" width="1" height="1"/><rect x="945" y="663" width="1" height="1" fill-opacity="0.45"/><rect x="948" y="664" width="1" height="1"/><rect x="948" y="663" width="1" height="1" fill-opacity="0.45"/><rect x="951" y="664" width="1" height="1"/><rect x="951" y="663" width="1" height="1" fill-opacity="0.45"/><rect x="954" y="664" width="1" height="1"/><rect x="954" y="663" width="1" height="1" fill-opacity="0.45"/></g>
</g>
</svg>
<div class="t" style="left:463px;top:78.5px;font-size:10px;font-weight:bold;color:#fff;letter-spacing:-0.1px">OPDS</div>
</body>
</html>
